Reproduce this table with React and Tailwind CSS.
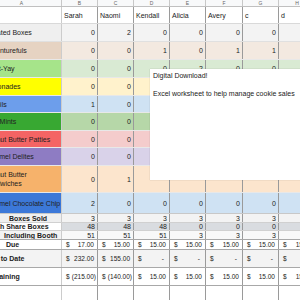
import React from "react";

const letters = ["A", "B", "C", "D", "E", "F", "G", "H"];
const colW = ["w-[36px]", "w-[36px]", "w-[36px]", "w-[36px]", "w-[37px]", "w-[36px]", "w-[37px]"];

const rows = [
  { h: "h-[17px]", label: "", a: "bg-white", c: "bg-white", kind: "name", vals: ["Sarah", "Naomi", "Kendall", "Alicia", "Avery", "c", "d"], line: "border-[#d9d9d9]" },
  { h: "h-[18px]", label: "Donated Boxes", a: "bg-[#efefef]", c: "bg-[#f3f3f3]", vals: [0, 2, 0, 0, 0, 0, ""], line: "border-[#e0e0e0]" },
  { h: "h-[18px]", label: "Adventurefuls", a: "bg-[#e6d3c2]", c: "bg-[#f3e9e0]", vals: [0, 0, 1, 0, 1, 1, ""], line: "border-[#e8e8e8]" },
  { h: "h-[18px]", label: "Toast-Yay", a: "bg-[#a6e48a]", c: "bg-[#d9ead3]", vals: [0, 0, 0, 2, 0, 0, ""], line: "border-[#e8e8e8]" },
  { h: "h-[18px]", label: "Lemonades", a: "bg-[#ffff00]", c: "bg-[#fff2cc]", vals: [0, 0, "", "", "", "", ""], line: "border-[#e8e8e8]" },
  { h: "h-[17px]", label: "Trefoils", a: "bg-[#6d9eeb]", c: "bg-[#cfe2f3]", vals: [1, 0, "", "", "", "", ""], line: "border-[#e8e8e8]" },
  { h: "h-[18px]", label: "Thin Mints", a: "bg-[#38a832]", c: "bg-[#b6d7a8]", vals: [0, 0, "", "", "", "", ""], line: "border-[#e8e8e8]" },
  { h: "h-[17px]", label: "Peanut Butter Patties", a: "bg-[#f46464]", c: "bg-[#f4cccc]", vals: [0, 0, "", "", "", "", ""], line: "border-[#e8e8e8]" },
  { h: "h-[18px]", label: "Caramel Delites", a: "bg-[#8e7cc3]", c: "bg-[#d9d2e9]", vals: [0, 0, "", "", "", "", ""], line: "border-[#e8e8e8]" },
  { h: "h-[27px]", label: "Peanut Butter Sandwiches", wrap: true, a: "bg-[#f6b26b]", c: "bg-[#fce5cd]", vals: [0, 1, "", "", "", "", ""], line: "border-[#e8e8e8]" },
  { h: "h-[21px]", label: "Caramel Chocolate Chip", a: "bg-[#3c78d8]", c: "bg-[#cfe2f3]", vals: [2, 0, 0, 0, 0, 0, ""], line: "border-[#c8c8c8]" },
  { h: "h-[9px]", pre: "Total", preW: "w-[27px]", label: "Boxes Sold", bold: true, a: "bg-[#efefef]", c: "bg-[#f3f3f3]", vals: [3, 3, 3, 3, 3, 3, 3], line: "border-[#d0d0d0]" },
  { h: "h-[8px]", label: "Booth Share Boxes", bold: true, a: "bg-white", c: "bg-[#d9dce0]", vals: [48, 48, 48, 0, 0, 0, 0], line: "border-[#d0d0d0]" },
  { h: "h-[9px]", pre: "Total", preW: "w-[22px]", label: "Including Booth", bold: true, a: "bg-[#f3f3f3]", c: "bg-[#f8f8f8]", vals: [51, 51, 51, 3, 3, 3, 3], line: "border-[#a8a8a8]" },
  { h: "h-[10px]", pre: "Total", preW: "w-[24px]", label: "Due", bold: true, a: "bg-white", c: "bg-white", kind: "acct", vals: ["17.00", "15.00", "15.00", "15.00", "15.00", "15.00", "15.00"], line: "border-[#a8a8a8]" },
  { h: "h-[18px]", label: "Paid to Date", bold: true, a: "bg-[#f3f3f3]", c: "bg-[#f3f3f3]", kind: "acct", vals: ["232.00", "155.00", "-", "-", "-", "-", "-"], line: "border-[#a8a8a8]" },
  { h: "h-[18px]", label: "Remaining", bold: true, a: "bg-white", c: "bg-white", kind: "acct", vals: ["(215.00)", "(140.00)", "15.00", "15.00", "15.00", "15.00", "15.00"], line: "border-[#a8a8a8]" },
  { h: "h-[16px]", label: "", a: "bg-white", c: "bg-white", vals: ["", "", "", "", "", "", ""], line: "border-[#e0e0e0]" },
];

function Cell({ row, v, i }) {
  const base = `${colW[i]} shrink-0 h-full flex items-center border-r border-[#9a9a9a] overflow-hidden ${row.c}`;
  if (row.kind === "name") {
    return <div className={`${base} pl-[2px]`}>{v}</div>;
  }
  if (row.kind === "acct") {
    const neg = String(v).startsWith("(");
    const dash = v === "-";
    return (
      <div className={`${base} justify-between pl-[4px] text-[6.5px] ${neg ? "pr-[1px]" : dash ? "pr-[5px]" : "pr-[3px]"}`}>
        <span>$</span>
        <span className="whitespace-nowrap">{v}</span>
      </div>
    );
  }
  return <div className={`${base} justify-end pr-[2px]`}>{v}</div>;
}

function Label({ row }) {
  if (row.wrap) {
    return (
      <span className="block">
        Peanut Butter
        <br />
        Sandwiches
      </span>
    );
  }
  if (row.pre) {
    return (
      <>
        <span className={`${row.preW} shrink-0 overflow-hidden whitespace-nowrap`}>{row.pre}</span>
        <span className="whitespace-nowrap">{row.label}</span>
      </>
    );
  }
  return <span className="whitespace-nowrap">{row.label}</span>;
}

export default function App() {
  return (
    <div className="relative w-[300px] h-[300px] overflow-hidden bg-white font-['Liberation_Sans',Arial,sans-serif] text-[7px] leading-[9px] text-[#222]">
      <div className="-ml-[18px] w-[340px]">
        <div className="flex h-[7px] bg-[#f8f9fa] border-b border-[#c0c0c0] text-[5px] leading-[6px] text-[#666]">
          <div className="w-[80px] shrink-0 h-full flex items-center justify-center border-r border-[#c8c8c8]">A</div>
          {letters.slice(1).map((l, i) => (
            <div key={l} className={`${colW[i]} shrink-0 h-full flex items-center justify-center border-r border-[#c8c8c8]`}>
              {l}
            </div>
          ))}
        </div>
        {rows.map((row, ri) => (
          <div key={ri} className={`flex ${row.h} border-b ${row.line}`}>
            <div className={`w-[80px] shrink-0 h-full flex items-center overflow-hidden border-r border-[#cccccc] ${row.a} ${row.pre ? "" : "pl-[2px]"} ${row.bold ? "font-bold" : ""}`}>
              <Label row={row} />
            </div>
            {row.vals.map((v, i) => (
              <Cell key={i} row={row} v={v} i={i} />
            ))}
          </div>
        ))}
      </div>
      <div className="absolute left-[150px] top-[69px] w-[150px] h-[111px] bg-white shadow-[0_0_1px_rgba(0,0,0,0.25)] pl-[3px] pt-[2px] text-[7px] leading-[9px] text-[#222]">
        <div>Digital Download!</div>
        <div className="mt-[9px]">Excel worksheet to help manage cookie sales</div>
      </div>
    </div>
  );
}
